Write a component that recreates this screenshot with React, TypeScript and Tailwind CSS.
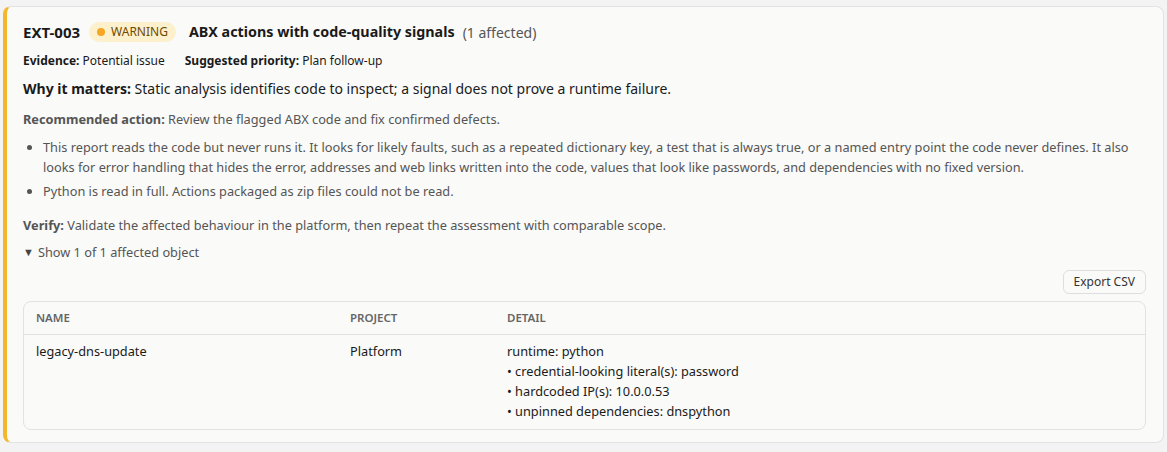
import React from "react";

const rows = [
  {
    name: "legacy-dns-update",
    project: "Platform",
    detail: [
      "runtime: python",
      "• credential-looking literal(s): password",
      "• hardcoded IP(s): 10.0.0.53",
      "• unpinned dependencies: dnspython",
    ],
  },
];

const App = () => {
  return (
    <div
      className="min-h-screen bg-[#f3f3f3] px-[3px] pt-[6px] text-[#1a1a1a]"
      style={{ fontFamily: '"Noto Sans", "Open Sans", sans-serif' }}
    >
      <div className="rounded-lg border border-[#e2e2e2] border-l-4 border-l-[#f4b72c] bg-[#fafaf9] pl-[16px] pr-[17px] pt-[14px] pb-[12px]">
        {/* Title row */}
        <div className="flex items-center h-[22px]">
          <span className="text-[15px] font-bold">EXT-003</span>
          <span className="ml-[9px] inline-flex items-center gap-[6px] rounded-full bg-[#fdf0cd] px-[8px] h-[20px] text-[12px] text-[#6e4a00]">
            <span className="h-[8px] w-[8px] rounded-full bg-[#f5a623]" />
            WARNING
          </span>
          <span className="ml-[13px] text-[14.3px] font-bold">ABX actions with code-quality signals</span>
          <span className="ml-[8px] text-[14px] text-[#555]">(1 affected)</span>
        </div>

        {/* Evidence */}
        <div className="mt-[9px] flex gap-[20px] text-[12px] leading-[18px]">
          <span>
            <b>Evidence:</b> Potential issue
          </span>
          <span>
            <b>Suggested priority:</b> Plan follow-up
          </span>
        </div>

        <p className="mt-[9px] text-[14px] leading-[20px]">
          <b>Why it matters:</b> Static analysis identifies code to inspect; a signal does not prove a runtime failure.
        </p>

        <p className="mt-[11px] text-[12.75px] leading-[18px] text-[#555]">
          <b>Recommended action:</b> Review the flagged ABX code and fix confirmed defects.
        </p>

        <ul className="mt-[9px] list-disc pl-[20px] text-[12.75px] leading-[20px] text-[#555]">
          <li>
            This report reads the code but never runs it. It looks for likely faults, such as a repeated dictionary key, a
            test that is always true, or a named entry point the code never defines. It also looks for error handling that
            hides the error, addresses and web links written into the code, values that look like passwords, and dependencies
            with no fixed version.
          </li>
          <li className="mt-[4px]">Python is read in full. Actions packaged as zip files could not be read.</li>
        </ul>

        <p className="mt-[15px] text-[12.75px] leading-[18px] text-[#555]">
          <b>Verify:</b> Validate the affected behaviour in the platform, then repeat the assessment with comparable scope.
        </p>

        <div className="mt-[9px] flex items-center gap-[4px] text-[12.75px] leading-[18px] text-[#555]">
          <span className="text-[11px] text-[#444]">▼</span>
          <span>Show 1 of 1 affected object</span>
        </div>

        <div className="mt-[9px] flex justify-end">
          <button className="h-[24px] rounded-md border border-[#dedede] bg-[#fafaf9] px-[10px] text-[12px] text-[#333]">
            Export CSV
          </button>
        </div>

        <div className="mt-[7px] overflow-hidden rounded-lg border border-[#e2e2e2]">
          <table className="w-full text-left text-[12.75px]">
            <thead>
              <tr className="border-b border-[#e2e2e2] text-[11.5px] font-semibold text-[#666]">
                <th className="w-[314px] px-[12px] h-[32px] font-semibold">NAME</th>
                <th className="w-[157px] px-[12px] font-semibold">PROJECT</th>
                <th className="px-[12px] font-semibold">DETAIL</th>
              </tr>
            </thead>
            <tbody>
              {rows.map((r) => (
                <tr key={r.name} className="align-top text-[#1a1a1a]">
                  <td className="px-[12px] pt-[6px] pb-[8px] leading-[20px]">{r.name}</td>
                  <td className="px-[12px] pt-[6px] leading-[20px]">{r.project}</td>
                  <td className="px-[12px] pt-[6px] pb-[8px] leading-[20px]">
                    {r.detail.map((d) => (
                      <div key={d}>{d}</div>
                    ))}
                  </td>
                </tr>
              ))}
            </tbody>
          </table>
        </div>
      </div>
    </div>
  );
};

export default App;
